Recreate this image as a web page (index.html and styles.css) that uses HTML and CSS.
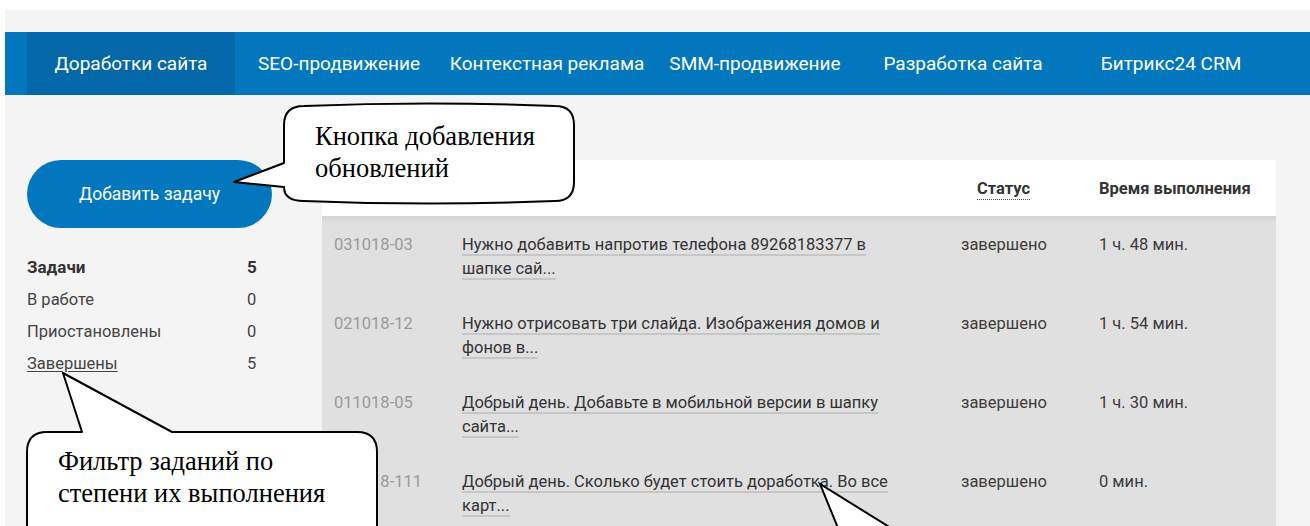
FILE: index.html
```html
<!DOCTYPE html>
<html lang="ru">
<head>
<meta charset="utf-8">
<title>Доработки сайта</title>
<link rel="stylesheet" href="styles.css">
</head>
<body>
<div class="page">
  <nav class="nav">
    <div class="nav-inner">
      <a class="nav-item active">Доработки сайта</a>
      <a class="nav-item">SEO-продвижение</a>
      <a class="nav-item">Контекстная реклама</a>
      <a class="nav-item">SMM-продвижение</a>
      <a class="nav-item">Разработка сайта</a>
      <a class="nav-item">Битрикс24 CRM</a>
    </div>
  </nav>

  <main class="main">
    <aside class="sidebar">
      <button class="add-btn">Добавить задачу</button>
      <ul class="stats">
        <li class="stat stat-total"><span>Задачи</span><span>5</span></li>
        <li class="stat"><span>В работе</span><span>0</span></li>
        <li class="stat"><span>Приостановлены</span><span>0</span></li>
        <li class="stat"><a class="stat-link">Завершены</a><span>5</span></li>
      </ul>
    </aside>

    <section class="tasks">
      <div class="tasks-head">
        <span class="th-id"></span>
        <span class="th-title"></span>
        <span class="th-status"><span class="sortable">Статус</span></span>
        <span class="th-time">Время выполнения</span>
      </div>
      <div class="tasks-body">
        <div class="task">
          <span class="task-id">031018-03</span>
          <span class="task-title"><a>Нужно добавить напротив телефона 89268183377 в шапке сай...</a></span>
          <span class="task-status">завершено</span>
          <span class="task-time">1 ч. 48 мин.</span>
        </div>
        <div class="task">
          <span class="task-id">021018-12</span>
          <span class="task-title"><a>Нужно отрисовать три слайда. Изображения домов и фонов в...</a></span>
          <span class="task-status">завершено</span>
          <span class="task-time">1 ч. 54 мин.</span>
        </div>
        <div class="task">
          <span class="task-id">011018-05</span>
          <span class="task-title"><a>Добрый день. Добавьте в мобильной версии в шапку сайта...</a></span>
          <span class="task-status">завершено</span>
          <span class="task-time">1 ч. 30 мин.</span>
        </div>
        <div class="task">
          <span class="task-id">011018-111</span>
          <span class="task-title"><a>Добрый день. Сколько будет стоить доработка. Во все карт...</a></span>
          <span class="task-status">завершено</span>
          <span class="task-time">0 мин.</span>
        </div>
      </div>
    </section>
  </main>
</div>

<!-- speech-bubble annotations drawn over the page -->
<svg class="notes" width="1310" height="526" viewBox="0 0 1310 526" xmlns="http://www.w3.org/2000/svg">
  <path class="bubble" d="M284,125 Q284,106 304,106 Q430,101 555,106 Q574,106 574,125 L574,182 Q574,201 555,201 Q430,206 304,201 Q284,201 284,187 L234,182 L284,163 Z"/>
  <text class="note-text" x="315" y="145">Кнопка добавления</text>
  <text class="note-text" x="315" y="177">обновлений</text>

  <path class="bubble" d="M27,540 L27,452 Q27,432 47,432 L82,432 L63,373 L172,432 L357,432 Q377,432 377,452 L377,540"/>
  <text class="note-text" x="58" y="470">Фильтр заданий по</text>
  <text class="note-text" x="58" y="502">степени их выполнения</text>

  <polygon class="tail-fill" points="820,484 838,528 891,528"/>
  <polyline class="tail-line" points="838,528 820,484 891,528"/>
</svg>
</body>
</html>
```

FILE: styles.css
```css
* {
  box-sizing: border-box;
}

html, body {
  margin: 0;
  padding: 0;
}

body {
  position: relative;
  width: 1310px;
  height: 526px;
  overflow: hidden;
  background: #ffffff;
  font-family: Roboto, "Noto Sans", Arial, sans-serif;
  color: #333333;
}

.page {
  margin: 10px 0 0 5px;
  padding-top: 22px;
  min-height: 600px;
  background: #f4f4f4;
}

/* top menu */
.nav {
  background: #0277be;
  height: 63px;
}

.nav-inner {
  display: flex;
  margin-left: 22px;
  height: 100%;
}

.nav-item {
  width: 208px;
  flex: none;
  display: flex;
  align-items: center;
  justify-content: center;
  color: #ffffff;
  font-size: 19px;
  text-decoration: none;
}

.nav-item.active {
  background: #0467a7;
}

/* content area */
.main {
  display: flex;
  gap: 50px;
  padding: 65px 0 0 22px;
}

.sidebar {
  width: 245px;
  flex: none;
}

.add-btn {
  display: block;
  width: 245px;
  height: 68px;
  border: none;
  border-radius: 34px;
  background: #0277be;
  color: #ffffff;
  font-family: inherit;
  font-size: 17.5px;
  cursor: pointer;
}

.stats {
  list-style: none;
  margin: 23px 0 0;
  padding: 0;
}

.stat {
  display: grid;
  grid-template-columns: 220px auto;
  height: 32px;
  align-items: center;
  font-size: 16.5px;
  color: #444444;
}

.stat-total {
  font-size: 17px;
  font-weight: bold;
  color: #333333;
}

.stat-link {
  color: #444444;
  text-decoration: underline;
  text-underline-offset: 2px;
}

/* task table */
.tasks {
  width: 954px;
  flex: none;
}

.tasks-head,
.task {
  display: grid;
  grid-template-columns: 128px 499px 138px 1fr;
  padding-left: 12px;
}

.tasks-head {
  height: 56px;
  align-items: center;
  background: #ffffff;
  font-size: 16.5px;
  font-weight: bold;
  color: #333333;
}

.th-status {
  padding-left: 16px;
}

.sortable {
  border-bottom: 1px dotted #555555;
  padding-bottom: 1px;
}

.tasks-body {
  background: #e0e0e0;
  box-shadow: inset 0 6px 6px -4px rgba(0, 0, 0, 0.08);
  min-height: 330px;
}

.task {
  padding: 17px 0 14px 12px;
  line-height: 24px;
  font-size: 16.5px;
}

.task-id {
  color: #9a9a9a;
}

.task-title {
  max-width: 445px;
}

.task-title a {
  color: #333333;
  text-decoration: none;
  border-bottom: 2px solid #c6c6c6;
}

.task-status,
.task-time {
  color: #3c3c3c;
}

/* annotations */
.notes {
  position: absolute;
  top: 0;
  left: 0;
  pointer-events: none;
}

.bubble {
  fill: #ffffff;
  stroke: #000000;
  stroke-width: 2;
  stroke-linejoin: round;
}

.tail-fill {
  fill: #ffffff;
}

.tail-line {
  fill: none;
  stroke: #000000;
  stroke-width: 2;
}

.note-text {
  font-family: "Liberation Serif", "Times New Roman", serif;
  font-size: 26.5px;
  fill: #000000;
}
```
